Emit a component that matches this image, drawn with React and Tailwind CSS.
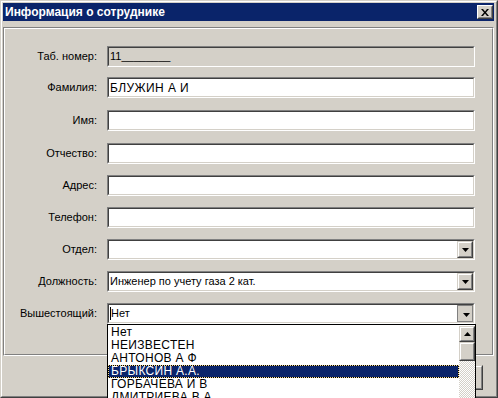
import React from "react";

const rows = [
  { label: "Таб. номер:", value: "11________", disabled: true, mt: "mt-[17px]" },
  { label: "Фамилия:", value: "БЛУЖИН А И", caps: true, mt: "mt-[10px]" },
  { label: "Имя:", mt: "mt-[12px]" },
  { label: "Отчество:", mt: "mt-[12px]" },
  { label: "Адрес:", mt: "mt-[11px]" },
  { label: "Телефон:", mt: "mt-[11px]" },
  { label: "Отдел:", combo: true, mt: "mt-[11px]" },
  { label: "Должность:", value: "Инженер по учету газа 2 кат.", combo: true, mt: "mt-[11px]" },
  { label: "Вышестоящий:", value: "Нет", combo: true, open: true, mt: "mt-[11px]" },
];

const items = ["Нет", "НЕИЗВЕСТЕН", "АНТОНОВ А Ф", "БРЫКСИН А.А.", "ГОРБАЧЕВА И В", "ДМИТРИЕВА В А"];

function Arrow({ up }) {
  return (
    <svg width="7" height="4" viewBox="0 0 7 4">
      <polygon points={up ? "3.5,0 7,4 0,4" : "0,0 7,0 3.5,4"} fill="#000" />
    </svg>
  );
}

function Raised({ className, children }) {
  return (
    <div className={"border border-t-[#d4d0c8] border-l-[#d4d0c8] border-b-[#404040] border-r-[#404040] " + className}>
      <div className="w-full h-full border border-t-white border-l-white border-b-[#808080] border-r-[#808080] bg-[#d4d0c8] flex items-center justify-center">
        {children}
      </div>
    </div>
  );
}

function Field({ row }) {
  return (
    <div className="w-[368px] h-[21px] border border-t-[#808080] border-l-[#808080] border-b-white border-r-white">
      <div
        className={
          "h-full border border-t-[#404040] border-l-[#404040] border-b-[#d4d0c8] border-r-[#d4d0c8] flex items-center " +
          (row.disabled ? "bg-[#d4d0c8]" : "bg-white")
        }
      >
        <div className="flex-1 flex items-center pl-[1px] whitespace-nowrap overflow-hidden">
          {row.open && <div className="w-[1px] h-[13px] bg-black" />}
          <span className={row.caps ? "text-[12px] tracking-[0.4px]" : ""}>{row.value}</span>
        </div>
        {row.combo &&
          (row.open ? (
            <div className="w-[16px] h-[17px] border border-[#808080] bg-[#d4d0c8] flex items-center justify-center pt-[2px] pl-[2px]">
              <Arrow />
            </div>
          ) : (
            <Raised className="w-[16px] h-[17px]">
              <Arrow />
            </Raised>
          ))}
      </div>
    </div>
  );
}

export default function App() {
  return (
    <div className="relative w-[498px] h-[398px] overflow-hidden bg-[#d4d0c8] font-['Liberation_Sans',Arial,sans-serif] text-[11px] text-black">
      {/* window frame */}
      <div className="w-full h-full border border-t-[#d4d0c8] border-l-[#d4d0c8] border-b-[#404040] border-r-[#404040]">
        <div className="w-full h-full border border-t-white border-l-white border-b-[#808080] border-r-[#808080] pt-[1px] pl-[1px] pr-[2px] pb-[1px] flex flex-col">
          {/* title */}
          <div className="h-[18px] bg-[#0a246a] flex items-center justify-between pl-[2px] pr-[1px]">
            <span className="text-white font-bold text-[12px]">Информация о сотруднике</span>
            <div className="w-[16px] h-[14px] border border-t-white border-l-white border-b-[#404040] border-r-[#404040]">
              <div className="w-full h-full border border-t-[#d4d0c8] border-l-[#d4d0c8] border-b-[#808080] border-r-[#808080] bg-[#d4d0c8] flex items-center justify-center">
                <svg width="8" height="7" viewBox="0 0 8 7">
                  <path d="M0 0h2l2 2.5L6 0h2L5 3.5 8 7H6L4 4.5 2 7H0l3-3.5z" fill="#000" />
                </svg>
              </div>
            </div>
          </div>

          {/* panel */}
          <div className="mt-[6px] h-[329px] border border-t-[#808080] border-l-[#808080] border-b-white border-r-white">
            <div className="w-full h-full border border-t-white border-l-white border-b-[#808080] border-r-[#808080] flex flex-col">
              {rows.map((row) => (
                <div key={row.label} className={"flex items-center h-[21px] " + row.mt}>
                  <div className="w-[92px] text-right whitespace-nowrap">{row.label}</div>
                  <div className="ml-[10px]">
                    <Field row={row} />
                  </div>
                </div>
              ))}
            </div>
          </div>

          {/* buttons row (under the dropdown) */}
          <div className="flex-1 flex justify-end items-start pt-[9px] pr-[11px] gap-[8px]">
            <Raised className="w-[75px] h-[25px]">
              <span>OK</span>
            </Raised>
            <Raised className="w-[75px] h-[25px]">
              <span>Отмена</span>
            </Raised>
          </div>
        </div>
      </div>

      {/* open dropdown list */}
      <div className="absolute left-[107px] top-[324px] w-[369px] h-[90px] border border-black bg-white flex">
        <div className="flex-1 pt-[1px] text-[12px] tracking-[0.3px]">
          {items.map((it) =>
            it === "БРЫКСИН А.А." ? (
              <div key={it} className="bg-black">
                <div className="h-[13px] leading-[11px] pl-[2px] border border-dotted border-[#f5db95] bg-[#0a246a] bg-clip-padding text-white whitespace-nowrap">
                  {it}
                </div>
              </div>
            ) : (
              <div key={it} className="h-[13px] leading-[13px] pl-[3px] whitespace-nowrap">
                {it}
              </div>
            )
          )}
        </div>
        <div className="w-[16px] h-full flex flex-col pt-[1px]">
          <Raised className="w-[16px] h-[16px]">
            <Arrow up />
          </Raised>
          <Raised className="w-[16px] h-[19px]" />
          <div className="flex-1 bg-[repeating-conic-gradient(#d4d0c8_0%_25%,#ffffff_0%_50%)] bg-[length:2px_2px]" />
        </div>
      </div>
    </div>
  );
}
